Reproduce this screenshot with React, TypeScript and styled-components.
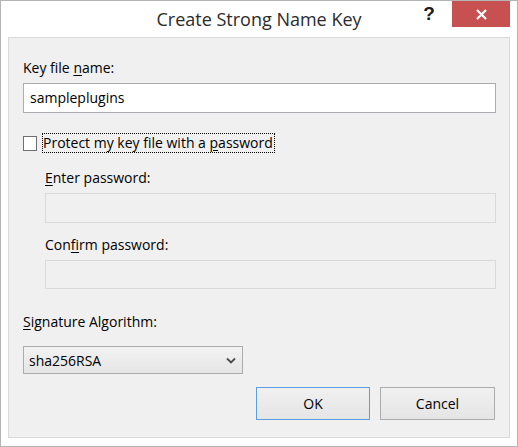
import React from "react";
import styled, { createGlobalStyle } from "styled-components";

const Global = createGlobalStyle`
  html, body { margin: 0; padding: 0; background: #ffffff; }
  * { box-sizing: border-box; }
`;

const FONT = `"Open Sans", "Noto Sans", "Liberation Sans", sans-serif`;

const Window = styled.div`
  width: 518px;
  height: 447px;
  border: 1px solid #b4b4b4;
  background: #ffffff;
  display: flex;
  flex-direction: column;
  padding: 0 7px 8px 7px;
  font-family: ${FONT};
  color: #000;
`;

const TitleBar = styled.div`
  height: 36px;
  display: grid;
  grid-template-columns: 1fr auto 1fr;
  align-items: start;
`;

const Title = styled.div`
  grid-column: 2;
  font-size: 18px;
  line-height: 36px;
  color: #2b2b2b;
  white-space: nowrap;
`;

const Caption = styled.div`
  grid-column: 3;
  display: flex;
  justify-content: flex-end;
  align-items: flex-start;
`;

const HelpButton = styled.div`
  width: 22px;
  height: 26px;
  margin-right: 12px;
  font-family: "Liberation Sans", sans-serif;
  font-weight: bold;
  font-size: 19px;
  line-height: 26px;
  text-align: center;
  color: #1a1a1a;
`;

const CloseButton = styled.div`
  width: 58px;
  height: 26px;
  background: #c75050;
  display: flex;
  align-items: center;
  justify-content: center;
`;

const Client = styled.div`
  flex: 1;
  border: 1px solid #dadada;
  background: #f0f0f0;
  display: flex;
  flex-direction: column;
  padding: 20px 13px 14px 14px;
  font-size: 14px;
`;

const Label = styled.div<{ $mt?: number }>`
  height: 20px;
  line-height: 20px;
  margin-top: ${(p) => p.$mt ?? 0}px;
  white-space: nowrap;
  u { text-underline-offset: 2px; }
`;

const TextBox = styled.div<{ $disabled?: boolean; $h?: number }>`
  height: ${(p) => p.$h ?? 30}px;
  margin-top: 5px;
  border: 1px solid ${(p) => (p.$disabled ? "#d9d9d9" : "#abadb3")};
  background: ${(p) => (p.$disabled ? "#f0f0f0" : "#ffffff")};
  padding: 0 6px;
  line-height: ${(p) => (p.$h ?? 30) - 2}px;
`;

const CheckRow = styled.div`
  display: flex;
  align-items: center;
  height: 20px;
  margin-top: 20px;
`;

const Box = styled.div`
  width: 14px;
  height: 15px;
  border: 1px solid #707070;
  background: #ffffff;
  margin-right: 5px;
`;

const Focus = styled.div`
  height: 20px;
  line-height: 18px;
  border: 1px dotted #000;
  padding: 0 1px 0 0;
  white-space: nowrap;
  u { text-underline-offset: 2px; }
`;

const Indent = styled.div`
  padding-left: 22px;
  display: flex;
  flex-direction: column;
`;

const Select = styled.div`
  width: 220px;
  height: 28px;
  margin-top: 14px;
  border: 1px solid #acacac;
  background: linear-gradient(#f2f2f2, #e5e5e5);
  display: flex;
  align-items: center;
  justify-content: space-between;
  padding: 0 6px 0 5px;
`;

const Buttons = styled.div`
  display: flex;
  justify-content: flex-end;
  gap: 10px;
  margin-top: 13px;
  padding-right: 1px;
`;

const Button = styled.div<{ $default?: boolean }>`
  width: ${(p) => (p.$default ? 114 : 115)}px;
  height: 33px;
  border: 1px solid ${(p) => (p.$default ? "#5b9fe0" : "#acacac")};
  background: linear-gradient(#f0f0f0, #e5e5e5);
  display: flex;
  align-items: center;
  justify-content: center;
`;

export default function App() {
  return (
    <>
      <Global />
      <Window>
        <TitleBar>
          <Title>Create Strong Name Key</Title>
          <Caption>
            <HelpButton>?</HelpButton>
            <CloseButton>
              <svg width="11" height="11" viewBox="0 0 11 11">
                <path d="M1 1 L10 10 M10 1 L1 10" stroke="#ffffff" strokeWidth="2.2" />
              </svg>
            </CloseButton>
          </Caption>
        </TitleBar>
        <Client>
          <Label>
            Key file <u>n</u>ame:
          </Label>
          <TextBox>sampleplugins</TextBox>
          <CheckRow>
            <Box />
            <Focus>
              Protect my key file with a <u>p</u>assword
            </Focus>
          </CheckRow>
          <Indent>
            <Label $mt={15}>
              <u>E</u>nter password:
            </Label>
            <TextBox $disabled />
            <Label $mt={12}>
              Con<u>f</u>irm password:
            </Label>
            <TextBox $disabled $h={29} />
          </Indent>
          <Label $mt={23}>
            <u>S</u>ignature Algorithm:
          </Label>
          <Select>
            <span>sha256RSA</span>
            <svg width="10" height="7" viewBox="0 0 10 7">
              <path d="M1 1.5 L5 5.5 L9 1.5" fill="none" stroke="#4d4d4d" strokeWidth="1.8" />
            </svg>
          </Select>
          <Buttons>
            <Button $default>OK</Button>
            <Button>Cancel</Button>
          </Buttons>
        </Client>
      </Window>
    </>
  );
}
